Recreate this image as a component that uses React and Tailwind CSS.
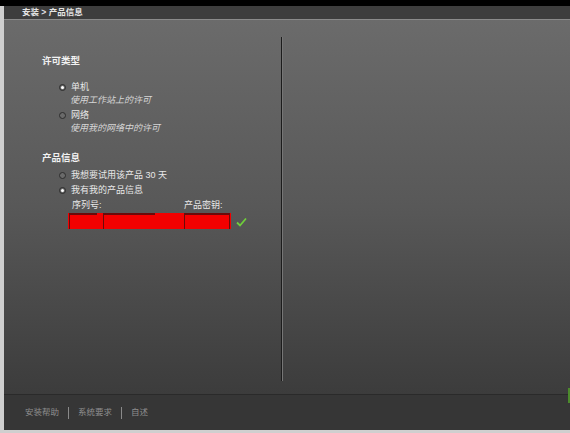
import React from 'react'

const font = { fontFamily: '"Liberation Sans", "Noto Sans CJK SC", sans-serif' }

function Radio({ checked }) {
  return (
    <span className="flex h-[7px] w-[7px] shrink-0 items-center justify-center rounded-full border border-[#2c2c2c] bg-[#6a6a6a]">
      {checked && <span className="h-[3px] w-[3px] rounded-full bg-white" />}
    </span>
  )
}

function Option({ checked, label, className = '' }) {
  return (
    <div className={`ml-[17px] flex items-center gap-[5px] text-[9px] leading-[13px] text-[#e8e8e8] ${className}`}>
      <Radio checked={checked} />
      <span>{label}</span>
    </div>
  )
}

function Hint({ children }) {
  return <div className="ml-[28px] text-[9px] leading-[13px] italic text-[#d6d6d6]">{children}</div>
}

export default function App() {
  return (
    <div className="relative flex h-[433px] w-[570px] flex-col overflow-hidden bg-[#cfcfcf]" style={font}>
      {/* top black bar */}
      <div className="h-[6px] shrink-0 bg-black" />

      <div className="ml-[4px] mb-[3px] flex flex-1 flex-col">
        {/* breadcrumb */}
        <div className="flex h-[13px] shrink-0 items-center bg-[#3d3d3d] pl-[18px] text-[8.5px] font-bold leading-[13px] text-[#e4e4e4]">
          安装 &gt; 产品信息
        </div>
        <div className="h-px shrink-0 bg-[#8a8a8a]" />

        {/* main */}
        <div className="flex flex-1 bg-gradient-to-b from-[#6b6b6b] via-[#585858] to-[#3c3c3c]">
          <div className="w-[277px] shrink-0 pl-[38px] pt-[34px]">
            <div className="text-[9.5px] font-bold leading-[13px] text-[#f2f2f2]">许可类型</div>
            <Option checked label="单机" className="mt-[14px]" />
            <Hint>使用工作站上的许可</Hint>
            <Option label="网络" className="mt-[2px]" />
            <Hint>使用我的网络中的许可</Hint>

            <div className="mt-[16px] text-[9.5px] font-bold leading-[13px] text-[#f2f2f2]">产品信息</div>
            <Option label="我想要试用该产品 30 天" className="mt-[5px]" />
            <Option checked label="我有我的产品信息" className="mt-[2px]" />

            <div className="ml-[30px] mt-[2px] flex text-[9px] leading-[13px] text-[#e8e8e8]">
              <span className="w-[112px]">序列号:</span>
              <span>产品密钥:</span>
            </div>
            <div className="ml-[26px] mt-[1px] flex items-center">
              <div className="flex h-[16px] w-[163px] items-stretch bg-[#f30000]">
                <div className="ml-[1px] w-[28px] border-t-2 border-l border-[#6a0a0a]" />
                <div className="ml-[6px] w-[52px] border-t-2 border-l border-[#6a0a0a]" />
                <div className="ml-[29px] w-[46px] border-t-2 border-l border-r border-[#6a0a0a]" />
              </div>
              <svg className="ml-[5px] mt-[2px]" width="11" height="10" viewBox="0 0 11 10">
                <path d="M1 5.5 L4 8.5 L10 1.5" fill="none" stroke="#6fcf3a" strokeWidth="1.8" />
              </svg>
            </div>
          </div>

          {/* divider */}
          <div className="mt-[17px] mb-[13px] w-[2px] shrink-0 border-l border-[#1c1c1c] border-r border-r-[#767676]" />
          <div className="flex-1" />
        </div>

        {/* footer */}
        <div className="h-px shrink-0 bg-[#2a2a2a]" />
        <div className="flex h-[35px] shrink-0 items-center gap-[9px] bg-[#363636] pl-[21px] text-[8.5px] text-[#8e8e8e]">
          <span>安装帮助</span>
          <span className="h-[12px] w-px bg-[#8a8a8a]" />
          <span>系统要求</span>
          <span className="h-[12px] w-px bg-[#8a8a8a]" />
          <span>自述</span>
        </div>
      </div>

      {/* green edge marker */}
      <div className="absolute right-0 top-[388px] h-[15px] w-[2px] bg-[#4c8a2c]" />
    </div>
  )
}
